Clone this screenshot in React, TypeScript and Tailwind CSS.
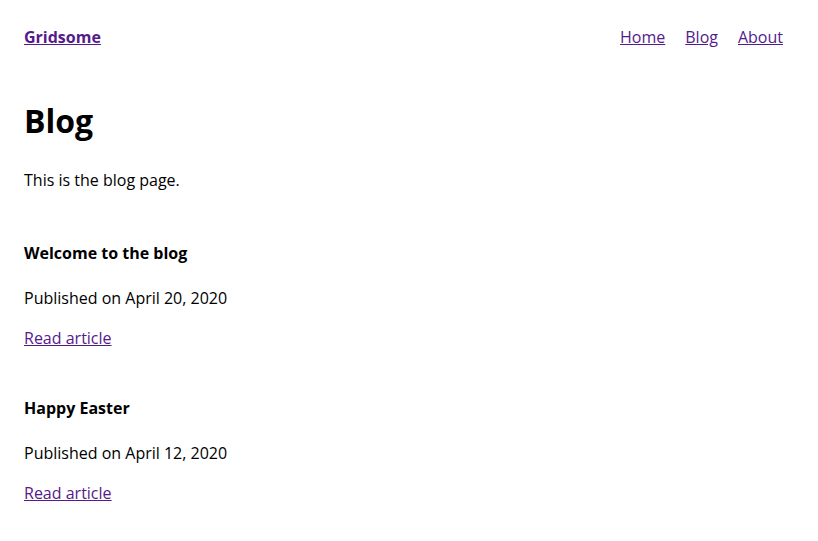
import React from 'react';

const posts = [
  { title: 'Welcome to the blog', date: 'April 20, 2020' },
  { title: 'Happy Easter', date: 'April 12, 2020' },
];

const linkCls = 'text-[#551a8b] underline';

export default function App() {
  return (
    <div className="min-h-[541px] bg-white pl-6 pr-[35px] text-base leading-6 text-black" style={{ fontFamily: '"Open Sans", sans-serif' }}>
      <header className="flex items-center justify-between pt-[25px]">
        <a href="#" className={`${linkCls} font-bold`}>Gridsome</a>
        <nav className="flex gap-5">
          <a href="#" className={linkCls}>Home</a>
          <a href="#" className={linkCls}>Blog</a>
          <a href="#" className={linkCls}>About</a>
        </nav>
      </header>

      <h1 className="mt-[50px] text-[32px] font-bold leading-[44px]">Blog</h1>
      <p className="mt-[25px]">This is the blog page.</p>

      {posts.map((post, i) => (
        <div key={post.title} className={i === 0 ? 'mt-[49px]' : 'mt-[46px]'}>
          <h4 className="font-bold">{post.title}</h4>
          <p className="mt-[21px]">Published on {post.date}</p>
          <a href="#" className={`${linkCls} mt-4 inline-block`}>Read article</a>
        </div>
      ))}
    </div>
  );
}
